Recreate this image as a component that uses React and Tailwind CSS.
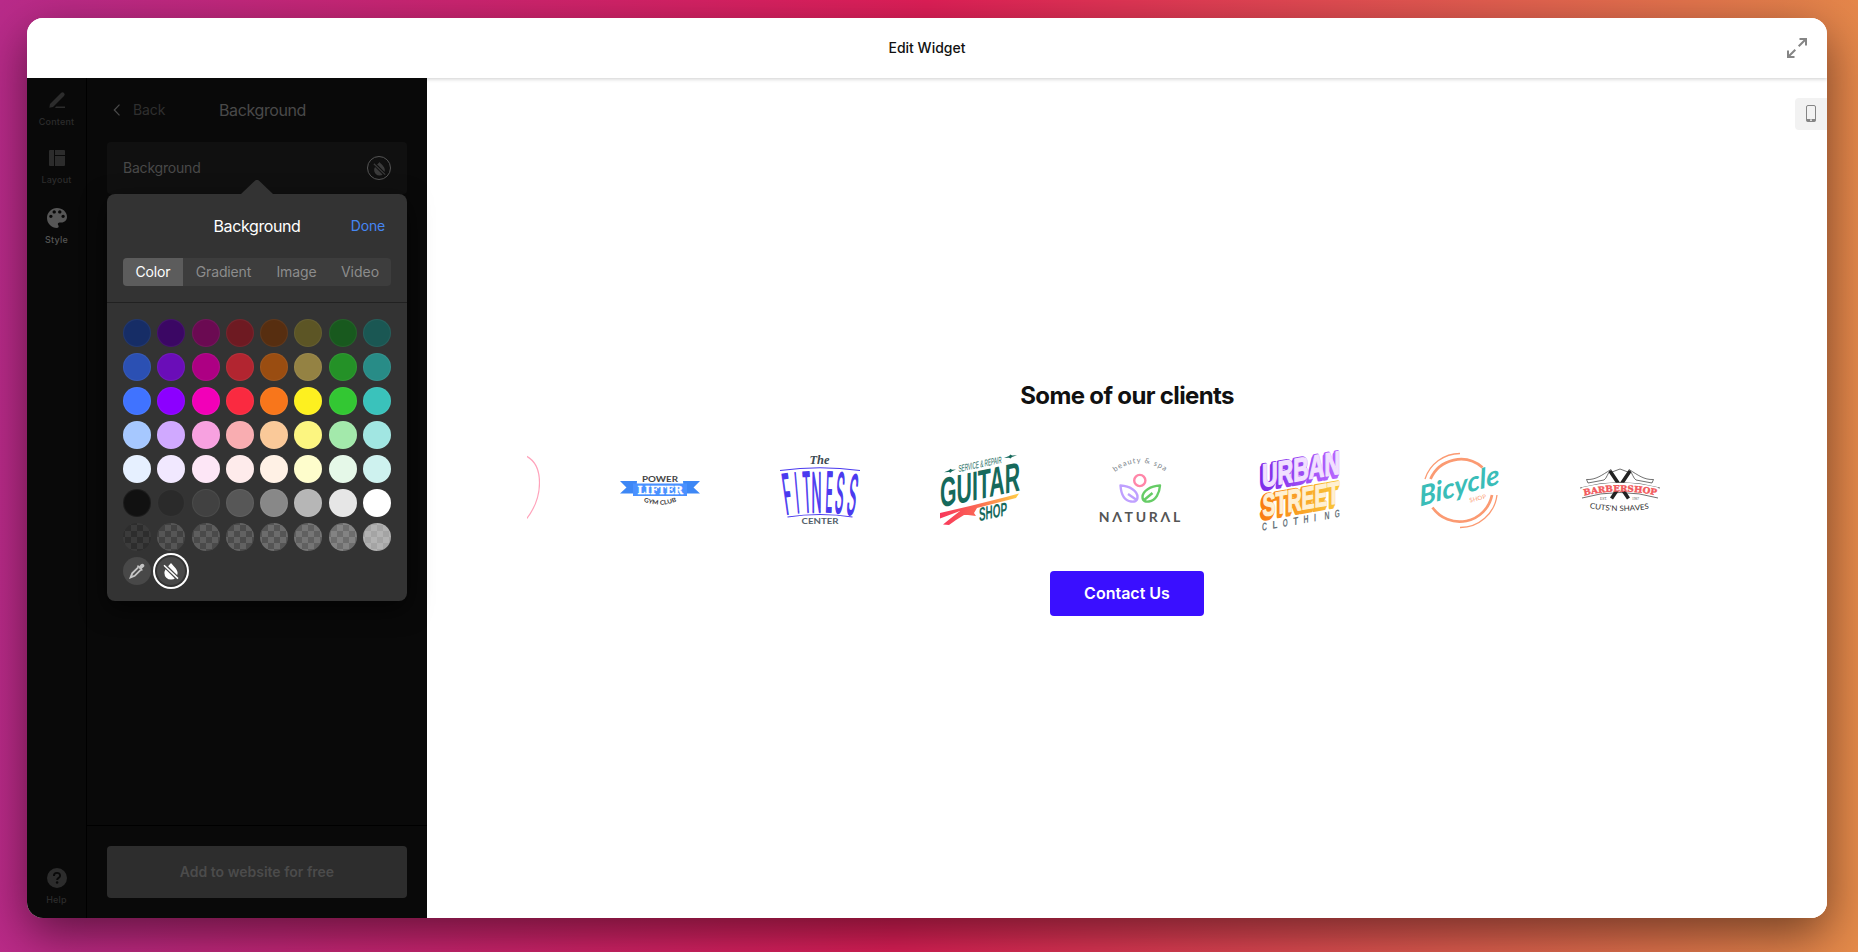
const PALETTE = [
  ['#162d66', '#3b0764', '#6b0a52', '#6e1a22', '#572e10', '#5c5525', '#18591e', '#1a5753'],
  ['#2b50b3', '#6a0db8', '#ad0083', '#b22530', '#9a4d11', '#948243', '#249127', '#288c87'],
  ['#4073ff', '#8c00ff', '#f200b8', '#fa2a40', '#f8761b', '#fdf020', '#33c733', '#3ac2bb'],
  ['#a6c8ff', '#d0a9ff', '#f7a1e0', '#f9adb1', '#fac999', '#fcf580', '#a3e9ab', '#a1e6e2'],
  ['#e6f0ff', '#f1e8ff', '#fde6f6', '#feebeb', '#fff1e5', '#fefdcc', '#e5f8e8', '#cef2ef'],
  ['#111111', '#2a2a2a', '#414141', '#575757', '#888888', '#b6b6b6', '#e6e6e6', '#ffffff'],
];

const CHECKERS = [
  ['#2d2d2d', '#3b3b3b'],
  ['#424242', '#565656'],
  ['#4a4a4a', '#5e5e5e'],
  ['#4c4c4c', '#626262'],
  ['#555555', '#6c6c6c'],
  ['#606060', '#757575'],
  ['#6e6e6e', '#838383'],
  ['#a4a4a4', '#b2b2b2'],
];

function NoFill({ className, gap }) {
  return (
    <svg viewBox="0 0 16 18" className={className} fill="currentColor">
      <path d="M8 1C9.2 3 14.6 6.7 14.6 11A6.6 6.6 0 0 1 1.4 11C1.4 6.7 6.8 3 8 1Z" />
      <path d="M1 2.8L15 16.8" stroke={gap} strokeWidth="4" />
      <path d="M1 3.2L15 16.6" stroke="currentColor" strokeWidth="1.5" />
    </svg>
  );
}

function RailItem({ label, className, children }) {
  return (
    <div className={`flex h-[58px] flex-col items-center ${className}`}>
      <div className="flex h-[22px] items-center justify-center">{children}</div>
      <span className="mt-[5px] text-[9px] leading-[12px] font-medium tracking-[0.2px]">{label}</span>
    </div>
  );
}

function Rail() {
  return (
    <nav className="flex w-[60px] shrink-0 flex-col border-r border-black pt-[11px] pb-[12px]">
      <RailItem label="Content" className="text-[#2c2c2c]">
        <svg viewBox="0 0 18 18" className="size-[18px]" fill="currentColor">
          <path d="M1.3 16.8L2 13L13 2A2.1 2.1 0 0 1 16 5L5 16Z" />
          <path d="M8 15.4H17V17H7Z" />
        </svg>
      </RailItem>
      <RailItem label="Layout" className="text-[#2c2c2c]">
        <svg viewBox="0 0 16 16" className="size-4" fill="currentColor">
          <path d="M1 0H5V16H1A1 1 0 0 1 0 15V1A1 1 0 0 1 1 0ZM6 0H15A1 1 0 0 1 16 1V5H6ZM6 6H16V15A1 1 0 0 1 15 16H6Z" />
        </svg>
      </RailItem>
      <RailItem label="Style" className="mt-[2px] text-[#565656]">
        <svg viewBox="3 3 18 18" className="size-5" fill="currentColor">
          <path d="M12 3c-4.970 0-9 4.030-9 9s4.030 9 9 9c.83 0 1.500-.67 1.500-1.500 0-.39-.15-.74-.39-1.010-.23-.26-.38-.61-.38-.99 0-.83.67-1.500 1.500-1.500H16c2.760 0 5-2.240 5-5 0-4.420-4.030-8-9-8zm-5.500 9c-.83 0-1.500-.67-1.500-1.500S5.670 9 6.500 9 8 9.670 8 10.500 7.330 12 6.500 12zm3-4C8.670 8 8 7.330 8 6.500S8.670 5 9.500 5s1.500.67 1.500 1.500S10.330 8 9.500 8zm5 0c-.83 0-1.500-.67-1.500-1.500S13.670 5 14.500 5s1.500.67 1.500 1.500S15.330 8 14.500 8zm3 4c-.83 0-1.500-.67-1.500-1.500S16.670 9 17.500 9s1.500.67 1.500 1.500-.67 1.500-1.500 1.500z" />
        </svg>
      </RailItem>
      <div className="mt-auto flex flex-col items-center text-[#2c2c2c]">
        <svg viewBox="0 0 20 20" className="size-5">
          <circle cx="10" cy="10" r="10" fill="currentColor" />
          <path d="M6.900 7.900C6.900 3.900 13.100 3.900 13.100 7.700C13.100 10 10.100 9.800 10.100 12.100" fill="none" stroke="#090909" strokeWidth="1.900" />
          <circle cx="10.100" cy="14.600" r="1.250" fill="#090909" />
        </svg>
        <span className="mt-[6px] text-[9px] leading-[12px] font-medium tracking-[0.2px]">Help</span>
      </div>
    </nav>
  );
}

function Swatches() {
  return (
    <div className="px-4 pt-4">
      <div className="grid grid-cols-[repeat(8,28px)] justify-between gap-y-[6px]">
        {PALETTE.flat().map((color, i) => (
          <div key={i} className="size-7 rounded-full border border-white/5" style={{ background: color }} />
        ))}
        {CHECKERS.map(([dark, light], i) => (
          <div
            key={i}
            className="size-7 rounded-full"
            style={{ background: `conic-gradient(${light} 25%, ${dark} 0 50%, ${light} 0 75%, ${dark} 0) 2px 2px / 12px 12px` }}
          />
        ))}
        <div className="flex size-7 items-center justify-center rounded-full bg-[#484848] text-[#c4c4c4]">
          <svg viewBox="0 0 16 16" className="size-4">
            <path d="M9.200 4.300L3.200 10.300L1.600 14.400L5.700 12.800L11.700 6.800" fill="none" stroke="currentColor" strokeWidth="1.900" />
            <path d="M0.700 15.300L1.500 12.800L3.200 14.500Z" fill="currentColor" />
            <path d="M7.900 3.200L9 2.100L10.200 3.200L12 1.300A1.900 1.900 0 0 1 14.700 4L12.800 5.800L13.900 7L12.800 8.100Z" fill="currentColor" />
          </svg>
        </div>
        <div className="flex size-7 items-center justify-center rounded-full bg-[#484848] text-white ring-2 ring-white ring-offset-2 ring-offset-[#333333]">
          <NoFill className="h-[18px] w-4" gap="#484848" />
        </div>
      </div>
    </div>
  );
}

function Popup() {
  return (
    <div className="absolute top-[116px] left-5 h-[407px] w-[300px] rounded-lg bg-[#333333] shadow-[0_8px_24px_rgba(0,0,0,0.6)]">
      <svg viewBox="0 0 32 14" className="absolute -top-[14px] left-[134px] h-[14px] w-8" fill="#333333">
        <path d="M0 14L13.600 0.900Q16 -1 18.400 0.900L32 14Z" />
      </svg>
      <div className="grid h-16 grid-cols-[1fr_auto_1fr] items-center px-[22px]">
        <span className="col-start-2 text-base tracking-[-0.4px] text-white">Background</span>
        <span className="justify-self-end text-sm tracking-[-0.2px] text-[#4586f3]">Done</span>
      </div>
      <div className="border-b border-[#212121] px-4 pb-4">
        <div className="flex h-7 overflow-hidden rounded bg-[#3d3d3d] text-sm text-[#8c8c8c]">
          <span className="flex w-[60px] items-center justify-center bg-[#5c5c5c] tracking-[-0.15px] text-white">Color</span>
          <span className="flex w-[81px] items-center justify-center tracking-[-0.15px]">Gradient</span>
          <span className="flex w-[65px] items-center justify-center tracking-[-0.1px]">Image</span>
          <span className="flex w-[62px] items-center justify-center">Video</span>
        </div>
      </div>
      <Swatches />
    </div>
  );
}

function Panel() {
  return (
    <section className="relative flex w-[340px] shrink-0 flex-col">
      <div className="grid h-16 grid-cols-[1fr_auto_1fr] items-center pr-6 pl-[26px]">
        <span className="flex items-center gap-3 text-sm tracking-[-0.1px] text-[#2f2f2f]">
          <svg viewBox="0 0 8 12" className="h-3 w-2" fill="none" stroke="#4b4b4b" strokeWidth="1.200">
            <path d="M6.500 0.700L1.300 6L6.500 11.300" />
          </svg>
          Back
        </span>
        <span className="pl-[9px] text-base tracking-[-0.4px] text-[#494949]">Background</span>
      </div>
      <div className="mx-5 flex h-[52px] items-center justify-between rounded bg-[#101010] px-4">
        <span className="text-sm tracking-[-0.2px] text-[#494949]">Background</span>
        <span className="flex size-6 items-center justify-center rounded-full border border-[#555555] text-[#3b3b3b]">
          <NoFill className="h-[15px] w-[13px]" gap="#101010" />
        </span>
      </div>
      <Popup />
      <div className="mt-auto h-[93px] border-t border-black px-5 pt-5">
        <div className="flex h-[52px] items-center justify-center rounded bg-[#2d2d2d] text-sm font-semibold text-[#4b4b4b]">
          Add to website for free
        </div>
      </div>
    </section>
  );
}

function RingLogo() {
  return (
    <svg viewBox="67 0 13 80" className="h-20 w-[13px] shrink-0" fill="none">
      <path d="M66 7C84 16 84 48 66 70.500" stroke="#ffa3bb" strokeWidth="1.200" />
    </svg>
  );
}

function PowerLogo() {
  return (
    <svg viewBox="0 0 80 80" className="size-20 shrink-0 overflow-visible">
      <path d="M0 32H17L16 44.500H0L6.500 38.500ZM80 32H63L64 44.500H80L73.500 38.500Z" fill="#3d87f5" />
      <path d="M13 34.500H67V47H13Z" fill="#4a91ff" />
      <text x="22" y="32.600" textLength="36" lengthAdjust="spacingAndGlyphs" className="font-['Lato'] text-[8px] font-bold" fill="#444444">POWER</text>
      <text x="17.500" y="45" textLength="45.500" lengthAdjust="spacingAndGlyphs" className="font-['DejaVu_Serif'] text-[11px] font-bold" fill="#ffffff" stroke="#ffffff" strokeWidth="0.400">LIFTER</text>
      <path id="gym-arc" d="M22.500 52Q40 59.500 59 51.500" fill="none" />
      <text className="font-['Lato'] text-[6px] font-bold" fill="#3a3a3a">
        <textPath href="#gym-arc" startOffset="1" textLength="34" lengthAdjust="spacingAndGlyphs">GYM CLUB</textPath>
      </text>
    </svg>
  );
}

const FITNESS_LETTERS = [
  ['F', 6, 65, 8, -8],
  ['I', 17, 63.500, 3, -5],
  ['T', 24, 63, 8, -3],
  ['N', 31.500, 62.500, 10, 0],
  ['E', 45, 62.500, 7, 2],
  ['S', 54, 63, 8.500, 5],
  ['S', 65.500, 64.500, 9, 8],
];

function FitnessLogo() {
  return (
    <svg viewBox="0 0 80 80" className="size-20 shrink-0 overflow-visible">
      <text x="29.500" y="14.500" textLength="20" lengthAdjust="spacingAndGlyphs" className="font-['Liberation_Serif'] text-[13px] font-bold italic" fill="#3d4a52">The</text>
      <path d="M0 21.500Q40 16 80 21.500M7.500 68Q40 63 72.500 68" fill="none" stroke="#4a3aef" strokeWidth="1.100" />
      {FITNESS_LETTERS.map(([ch, x, y, width, turn], i) => (
        <text
          key={i}
          transform={`translate(${x} ${y}) rotate(${turn})`}
          textLength={width}
          lengthAdjust="spacingAndGlyphs"
          className="font-['Inter'] font-light"
          fontSize="54"
          fill="#4a3aef"
          stroke="#4a3aef"
          strokeWidth="2.600"
        >
          {ch}
        </text>
      ))}
      <text x="21.500" y="75" textLength="37" lengthAdjust="spacingAndGlyphs" className="font-['Lato'] text-[8px] font-bold" fill="#52606a">CENTER</text>
    </svg>
  );
}

function GuitarLogo() {
  return (
    <svg viewBox="0 0 80 80" className="size-20 shrink-0 overflow-visible">
      <defs>
        <linearGradient id="guitar-flame" x1="0" x2="1">
          <stop offset="0" stopColor="#f8365b" />
          <stop offset="0.450" stopColor="#fb6555" />
          <stop offset="1" stopColor="#ffcf45" />
        </linearGradient>
      </defs>
      <g transform="skewY(-12)" fill="#16695b">
        <text transform="translate(18.500 27) scale(1 1.200)" textLength="43" lengthAdjust="spacingAndGlyphs" className="font-['Liberation_Sans_Narrow','Liberation_Sans'] text-[8px]">SERVICE &amp; REPAIR</text>
        <path d="M4 24L9 23.200L10.500 22L12 23.300L16 24L12 24.800L10.500 26L9 24.800ZM64 22.500L69 21.600L70.500 20.500L72 21.800L77 22.500L72 23.300L70.500 24.500L69 23.300Z" />
        <text transform="translate(0 58.500) scale(1 1.250)" textLength="80" lengthAdjust="spacingAndGlyphs" className="font-['Liberation_Sans'] text-[33px] font-bold">GUITAR</text>
        <text transform="translate(39 80.500) scale(1 1.200)" textLength="28" lengthAdjust="spacingAndGlyphs" className="font-['Liberation_Sans'] text-[16px] font-bold">SHOP</text>
      </g>
      <path d="M0 64L30 57L66 48L79 44.500L76 49L37 59L34 64L36 67L28 66L24 66L16 71L9 76L3 75.500L11 69L20 62L0 69.500Z" fill="url(#guitar-flame)" />
    </svg>
  );
}

function NaturalLogo() {
  return (
    <svg viewBox="0 0 80 80" className="size-20 shrink-0 overflow-visible">
      <path id="spa-arc" d="M15 23Q40 4 67.500 24" fill="none" />
      <text className="font-[Lato] text-[7.500px]" fill="#7d868c" letterSpacing="1">
        <textPath href="#spa-arc" startOffset="0">beauty &amp; spa</textPath>
      </text>
      <circle cx="39.800" cy="31.500" r="5.600" fill="none" stroke="#ff86a8" strokeWidth="2.400" />
      <path d="M20.500 36.500C30 37 37.500 42 37.500 48C37.500 52.500 34 53 31 52.500C24 51.500 21 44 20.500 36.500ZM28 45L36 50.500" fill="none" stroke="#bfa0ff" strokeWidth="2.400" strokeLinejoin="round" />
      <path d="M60 36.500C50.500 37 42.500 42 42.500 48C42.500 52.500 46 53 49 52.500C56 51.500 59.500 44 60 36.500ZM52.500 44L43.500 51.500" fill="none" stroke="#66cc66" strokeWidth="2.400" strokeLinejoin="round" />
      <text x="-1.300" y="73" textLength="81.500" className="font-[Lato] text-[14px] font-bold" fill="#555555">N&#923;TUR&#923;L</text>
    </svg>
  );
}

function UrbanLogo() {
  return (
    <svg viewBox="0 0 80 80" className="size-20 shrink-0 overflow-visible">
      <defs>
        <linearGradient id="urban-purple" x1="0" x2="1">
          <stop offset="0" stopColor="#7c2be8" />
          <stop offset="1" stopColor="#b868ff" />
        </linearGradient>
        <linearGradient id="street-orange" x1="0" x2="1">
          <stop offset="0" stopColor="#f97c12" />
          <stop offset="1" stopColor="#f9c63a" />
        </linearGradient>
      </defs>
      <g transform="skewY(-10)" strokeLinejoin="round" className="font-['Liberation_Sans'] font-bold">
        <g fill="url(#urban-purple)" stroke="url(#urban-purple)">
          <text transform="translate(1 39) scale(1 1.300)" strokeWidth="3" textLength="78" lengthAdjust="spacingAndGlyphs" fontSize="25">URBAN</text>
          <text transform="translate(0 41) scale(1 1.300)" strokeWidth="3" textLength="78" lengthAdjust="spacingAndGlyphs" fontSize="25">URBAN</text>
        </g>
        <text transform="translate(2 38.500) scale(1 1.300)" fill="#f2e0ff" stroke="#f2e0ff" strokeWidth="1" textLength="78" lengthAdjust="spacingAndGlyphs" fontSize="25">URBAN</text>
        <g fill="url(#street-orange)" stroke="url(#street-orange)">
          <text transform="translate(1.500 68.500) scale(1 1.300)" strokeWidth="3" textLength="77" lengthAdjust="spacingAndGlyphs" fontSize="24">STREET</text>
          <text transform="translate(0.500 70.500) scale(1 1.300)" strokeWidth="3" textLength="77" lengthAdjust="spacingAndGlyphs" fontSize="24">STREET</text>
        </g>
        <text transform="translate(2.500 68) scale(1 1.300)" fill="#fff0d2" stroke="#fff0d2" strokeWidth="0.900" textLength="77" lengthAdjust="spacingAndGlyphs" fontSize="24">STREET</text>
      </g>
      <g transform="skewY(-10)">
        {['C', 'L', 'O', 'T', 'H', 'I', 'N', 'G'].map((ch, i) => (
          <text key={i} x={2 + i * 10.4} y="82" textLength={ch === 'I' ? 2 : 5} lengthAdjust="spacingAndGlyphs" className="font-['Liberation_Sans'] text-[11px] font-bold" fill="#68747c">{ch}</text>
        ))}
      </g>
    </svg>
  );
}

function BicycleLogo() {
  return (
    <svg viewBox="0 0 80 80" className="size-20 shrink-0 overflow-visible">
      <g fill="none" stroke="#fb9a72">
        <path d="M10.500 30A33 33 0 0 1 62.500 18.500M12.500 58.500A33 33 0 0 0 72 46" strokeWidth="2.700" />
        <path d="M5 30A37 37 0 0 1 40 4.500M40 78.500A37 37 0 0 0 77 46" strokeWidth="1.300" />
      </g>
      <text transform="translate(0 57.500) rotate(-16) skewX(-12)" textLength="83" lengthAdjust="spacingAndGlyphs" fill="#3abdb8" className="font-[Lato] text-[27px] font-bold italic">Bicycle</text>
      <text transform="translate(50 53.500) rotate(-14)" textLength="17" className="font-[Lato] text-[6px]" fill="#fb9a72">SHOP</text>
    </svg>
  );
}

function BarberLogo() {
  return (
    <svg viewBox="0 0 80 80" className="size-20 shrink-0 overflow-visible">
      <g fill="none" stroke="#333333" strokeWidth="0.700">
        <path d="M6.500 30.500C16 31 22 26 31 20.500C27 25 27 29 24 31L8 34ZM73.500 30.500C64 31 58 26 49 20.500C53 25 53 29 56 31L72 34ZM32 23L40 20L48 23" />
        <path d="M0 39Q40 28 80 39M2 49Q40 38 78 49" />
      </g>
      <path d="M30 22L48.500 49.500M50 22L31.500 49.500" stroke="#222222" strokeWidth="3.600" />
      <path d="M2 38.500Q40 29 78 38.500V46.500Q40 37 2 46.500Z" fill="#ffffff" />
      <path id="barber-arc" d="M4 46.500Q40 38.500 78 46.500" fill="none" />
      <text className="font-['DejaVu_Serif'] text-[8.500px] font-bold" fill="#f2595b" stroke="#f2595b" strokeWidth="0.400">
        <textPath href="#barber-arc" textLength="73" lengthAdjust="spacingAndGlyphs">BARBERSHOP</textPath>
      </text>
      <text x="20" y="50.500" textLength="7" lengthAdjust="spacingAndGlyphs" className="font-['Liberation_Serif'] text-[4px]" fill="#555555">EST.</text>
      <text x="52" y="50.500" textLength="7" lengthAdjust="spacingAndGlyphs" className="font-['Liberation_Serif'] text-[4px]" fill="#555555">1987</text>
      <path id="shaves-arc" d="M9.500 59Q40 65 73 59" fill="none" />
      <text className="font-['Lato'] text-[7.500px]" fill="#333333">
        <textPath href="#shaves-arc" textLength="60" lengthAdjust="spacingAndGlyphs">CUTS&apos;N SHAVES</textPath>
      </text>
    </svg>
  );
}

function Preview() {
  return (
    <main className="relative flex flex-1 flex-col items-center bg-white">
      <div className="absolute top-5 right-0 flex h-8 w-8 items-center justify-center rounded-l bg-[#f2f2f2]">
        <svg viewBox="0 0 10 17" className="-mt-px h-[17px] w-[10px]">
          <rect x="0.500" y="0.500" width="9" height="16" rx="1.500" fill="none" stroke="#858585" />
          <path d="M0.500 14H9.500V16.500H0.500Z" fill="#858585" />
          <rect x="4" y="14.500" width="2" height="1.300" fill="#f2f2f2" />
        </svg>
      </div>
      <h1 className="mt-[300px] text-2xl leading-[36px] font-bold tracking-[-0.650px] text-[#111111]">Some of our clients</h1>
      <div className="mt-[35px] flex h-20 w-[1200px] gap-20">
        <RingLogo />
        <PowerLogo />
        <FitnessLogo />
        <GuitarLogo />
        <NaturalLogo />
        <UrbanLogo />
        <BicycleLogo />
        <BarberLogo />
      </div>
      <div className="mt-[42px] flex h-[45px] w-[154px] items-center justify-center rounded bg-[#3a0fff] pb-px text-base font-semibold text-white">
        Contact Us
      </div>
    </main>
  );
}

export default function App() {
  return (
    <div className="h-[952px] w-[1858px] overflow-hidden bg-[linear-gradient(92deg,#b92b8a_0%,#e01f58_49%,#e58b4a_100%)] px-[27px] pt-[18px] font-['Inter',sans-serif] antialiased">
      <div className="h-[900px] w-[1800px] rounded-2xl shadow-[0_16px_48px_rgba(0,0,0,0.5)]">
        <div className="flex h-full flex-col overflow-hidden rounded-2xl bg-white">
          <header className="relative z-10 grid h-[60px] shrink-0 grid-cols-[1fr_auto_1fr] items-center bg-white pr-5 shadow-[0_1px_4px_rgba(0,0,0,0.2)]">
            <span className="col-start-2 pl-5 text-sm font-medium text-[#111111]">Edit Widget</span>
            <svg viewBox="0 0 20 20" className="size-5 justify-self-end" fill="none" stroke="#858585" strokeWidth="2">
              <path d="M12.500 1H19V7.500M19 1L11.700 8.300M7.500 19H1V12.500M1 19L8.300 11.700" />
            </svg>
          </header>
          <div className="flex min-h-0 flex-1">
            <aside className="relative z-20 flex w-[400px] shrink-0 bg-[#090909]">
              <Rail />
              <Panel />
            </aside>
            <Preview />
          </div>
        </div>
      </div>
    </div>
  );
}
